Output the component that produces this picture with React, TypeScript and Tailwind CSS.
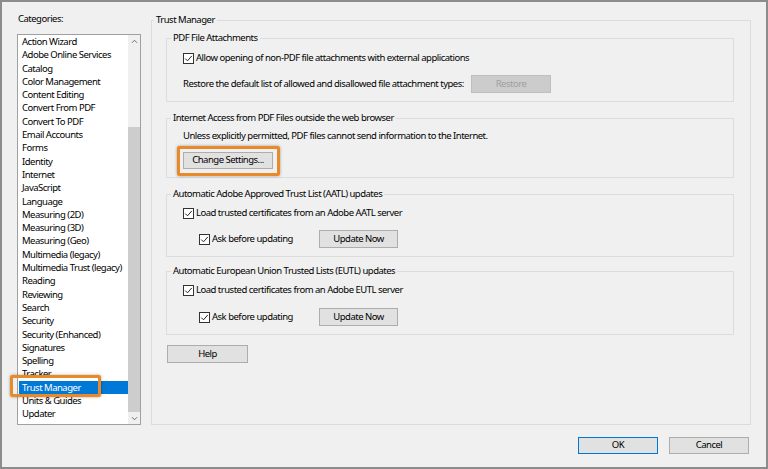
import React from "react";

const categories = [
  "Action Wizard",
  "Adobe Online Services",
  "Catalog",
  "Color Management",
  "Content Editing",
  "Convert From PDF",
  "Convert To PDF",
  "Email Accounts",
  "Forms",
  "Identity",
  "Internet",
  "JavaScript",
  "Language",
  "Measuring (2D)",
  "Measuring (3D)",
  "Measuring (Geo)",
  "Multimedia (legacy)",
  "Multimedia Trust (legacy)",
  "Reading",
  "Reviewing",
  "Search",
  "Security",
  "Security (Enhanced)",
  "Signatures",
  "Spelling",
  "Tracker",
  "Trust Manager",
  "Units & Guides",
  "Updater",
];

function CheckBox() {
  return (
    <span className="w-[11px] h-[11px] border border-[#333333] bg-white flex items-center justify-center shrink-0">
      <svg viewBox="0 0 10 10" className="w-[9px] h-[9px]">
        <path d="M1.4 5.1 L3.9 7.6 L8.7 2.1" fill="none" stroke="#222222" strokeWidth="1.1" />
      </svg>
    </span>
  );
}

function Btn({ children, className = "" }: { children: React.ReactNode; className?: string }) {
  return (
    <div
      className={`bg-[#e1e1e1] border border-[#adadad] flex items-center justify-center shrink-0 ${className}`}
    >
      {children}
    </div>
  );
}

function Group({
  label,
  className = "",
  children,
}: {
  label: string;
  className?: string;
  children: React.ReactNode;
}) {
  return (
    <fieldset className={`border border-[#dcdcdc] ${className}`}>
      <legend className="ml-[4px] px-[2px] leading-[16px]">{label}</legend>
      {children}
    </fieldset>
  );
}

function Orange({ className }: { className: string }) {
  return (
    <div
      className={`absolute border-[3px] border-[#e8892a] rounded-[2px] shadow-[0_0_3px_rgba(0,0,0,0.35)] pointer-events-none ${className}`}
    />
  );
}

function Chevron({ down = false }: { down?: boolean }) {
  return (
    <svg viewBox="0 0 8 6" className="w-[7px] h-[5px]">
      <path
        d={down ? "M1 1.5 L4 4.5 L7 1.5" : "M1 4.5 L4 1.5 L7 4.5"}
        fill="none"
        stroke="#606060"
        strokeWidth="1.1"
      />
    </svg>
  );
}

export default function App() {
  return (
    <div
      className="w-[768px] h-[469px] border-2 border-[#8c8c8c] bg-[#f0f0f0] text-[9.5px] tracking-[-0.5px] text-black flex flex-col overflow-hidden"
      style={{ fontFamily: '"Noto Sans", "Liberation Sans", sans-serif' }}
    >
      <div className="flex pl-[15px]">
        {/* categories */}
        <div className="flex flex-col pt-[9px]">
          <div className="leading-[16px] pl-[1px]">Categories:</div>
          <div className="mt-[7px] w-[124px] h-[391px] border border-[#a0a0a0] bg-white flex">
            <div className="flex-1 min-w-0 flex flex-col">
              {categories.map((c) => {
                const sel = c === "Trust Manager";
                return (
                  <div
                    key={c}
                    className={`relative ml-[1px] pl-[3px] h-[13.3px] leading-[13.3px] whitespace-nowrap ${
                      sel ? "bg-[#0078d7] text-white" : ""
                    }`}
                  >
                    {c}
                    {sel && <Orange className="-left-[9px] -top-[6px] w-[91px] h-[22px]" />}
                  </div>
                );
              })}
            </div>
            <div className="w-[12px] shrink-0 flex flex-col bg-[#f0f0f0]">
              <div className="h-[12px] flex items-center justify-center">
                <Chevron />
              </div>
              <div className="h-[80px]" />
              <div className="flex-1 bg-[#cdcdcd]" />
              <div className="h-[12px] flex items-center justify-center">
                <Chevron down />
              </div>
            </div>
          </div>
        </div>

        {/* trust manager */}
        <fieldset className="ml-[10px] mt-[10px] w-[600px] border border-[#dcdcdc] pb-[7px]">
          <legend className="ml-[2px] px-[2px] leading-[16px]">Trust Manager</legend>

          <Group label="PDF File Attachments" className="mt-[2px] ml-[14px] mr-[16px] pb-[8px]">
            <div className="mt-[4px] h-[16px] pl-[16px] flex items-center gap-[2px]">
              <CheckBox />
              <span>Allow opening of non-PDF file attachments with external applications</span>
            </div>
            <div className="mt-[9px] h-[18px] pl-[16px] flex items-center">
              <span className="w-[288px] whitespace-nowrap">
                Restore the default list of allowed and disallowed file attachment types:
              </span>
              <div className="w-[80px] h-[18px] bg-[#cccccc] border border-[#bfbfbf] text-[#a0a0a0] flex items-center justify-center">
                Restore
              </div>
            </div>
          </Group>

          <Group
            label="Internet Access from PDF Files outside the web browser"
            className="mt-[8px] ml-[14px] mr-[16px] pb-[8px]"
          >
            <div className="mt-[2px] leading-[16px] pl-[16px]">
              Unless explicitly permitted, PDF files cannot send information to the Internet.
            </div>
            <div className="mt-[8px] ml-[16px] relative w-[90px] h-[17px]">
              <Btn className="w-[90px] h-[17px]">Change Settings...</Btn>
              <Orange className="-left-[6px] -top-[6px] -right-[7px] -bottom-[7px]" />
            </div>
          </Group>

          <Group
            label="Automatic Adobe Approved Trust List (AATL) updates"
            className="mt-[8px] ml-[14px] mr-[16px] pb-[8px]"
          >
            <div className="mt-[3px] h-[16px] pl-[16px] flex items-center gap-[2px]">
              <CheckBox />
              <span>Load trusted certificates from an Adobe AATL server</span>
            </div>
            <div className="mt-[9px] h-[18px] pl-[32px] flex items-center">
              <div className="w-[120px] flex items-center gap-[2px]">
                <CheckBox />
                <span>Ask before updating</span>
              </div>
              <Btn className="w-[79px] h-[18px]">Update Now</Btn>
            </div>
          </Group>

          <Group
            label="Automatic European Union Trusted Lists (EUTL) updates"
            className="mt-[6px] ml-[14px] mr-[16px] pb-[8px]"
          >
            <div className="mt-[3px] h-[16px] pl-[16px] flex items-center gap-[2px]">
              <CheckBox />
              <span>Load trusted certificates from an Adobe EUTL server</span>
            </div>
            <div className="mt-[10px] h-[18px] pl-[32px] flex items-center">
              <div className="w-[120px] flex items-center gap-[2px]">
                <CheckBox />
                <span>Ask before updating</span>
              </div>
              <Btn className="w-[79px] h-[18px]">Update Now</Btn>
            </div>
          </Group>

          <Btn className="mt-[10px] ml-[15px] w-[81px] h-[18px]">Help</Btn>
        </fieldset>
      </div>

      <div className="mt-auto flex justify-end gap-[11px] pr-[17px] pb-[13px]">
        <div className="w-[80px] h-[17px] bg-[#e1e1e1] border border-[#0078d7] flex items-center justify-center">
          OK
        </div>
        <Btn className="w-[80px] h-[17px]">Cancel</Btn>
      </div>
    </div>
  );
}
